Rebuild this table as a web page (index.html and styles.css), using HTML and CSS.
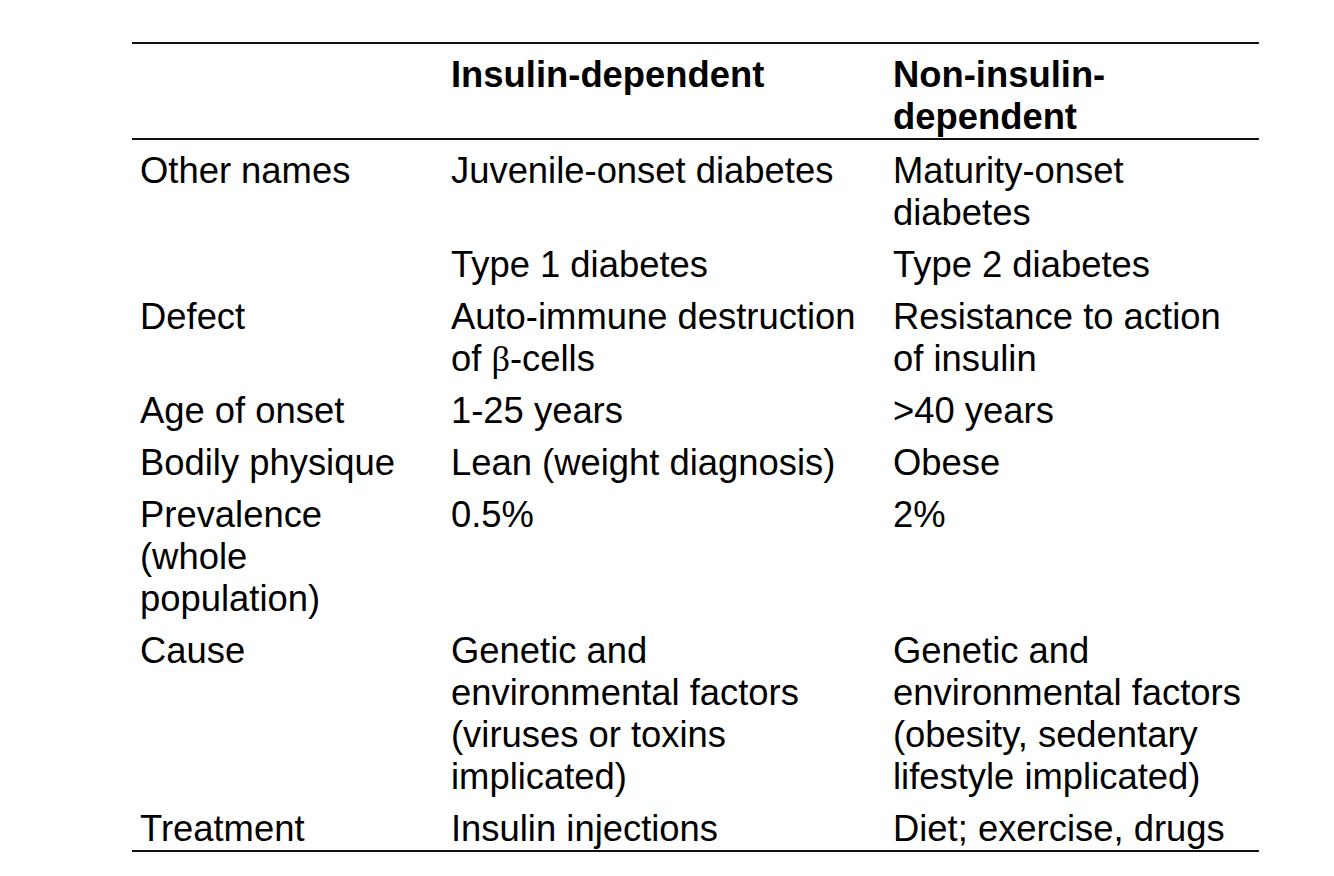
FILE: index.html
```html
<!DOCTYPE html>
<html lang="en">
<head>
<meta charset="utf-8">
<title>Diabetes comparison</title>
<link rel="stylesheet" href="styles.css">
</head>
<body>
<table class="cmp">
  <colgroup>
    <col class="c1">
    <col class="c2">
    <col class="c3">
  </colgroup>
  <thead>
    <tr>
      <th></th>
      <th>Insulin-dependent</th>
      <th>Non-insulin-dependent</th>
    </tr>
  </thead>
  <tbody>
    <tr>
      <td>Other names</td>
      <td>Juvenile-onset diabetes</td>
      <td>Maturity-onset diabetes</td>
    </tr>
    <tr>
      <td></td>
      <td>Type 1 diabetes</td>
      <td>Type 2 diabetes</td>
    </tr>
    <tr>
      <td>Defect</td>
      <td>Auto-immune destruction of <span class="greek">β</span>-cells</td>
      <td>Resistance to action of insulin</td>
    </tr>
    <tr>
      <td>Age of onset</td>
      <td>1-25 years</td>
      <td>&gt;40 years</td>
    </tr>
    <tr>
      <td>Bodily physique</td>
      <td>Lean (weight diagnosis)</td>
      <td>Obese</td>
    </tr>
    <tr>
      <td>Prevalence (whole population)</td>
      <td>0.5%</td>
      <td>2%</td>
    </tr>
    <tr>
      <td>Cause</td>
      <td>Genetic and environmental factors (viruses or toxins implicated)</td>
      <td>Genetic and environmental factors (obesity, sedentary lifestyle implicated)</td>
    </tr>
    <tr>
      <td>Treatment</td>
      <td>Insulin injections</td>
      <td>Diet; exercise, drugs</td>
    </tr>
  </tbody>
</table>
</body>
</html>
```
FILE: styles.css
```css
html, body {
  margin: 0;
  padding: 0;
  background: #ffffff;
}

body {
  padding-top: 42px;
  font-family: "Liberation Sans", Arial, sans-serif;
  color: #000000;
}

.cmp {
  margin-left: 132px;
  width: 1127px;
  table-layout: fixed;
  border-collapse: collapse;
  border-spacing: 0;
  font-size: 36.4px;
  line-height: 42px;
}

.c1 { width: 311px; }
.c2 { width: 442px; }
.c3 { width: 374px; }

.cmp th,
.cmp td {
  text-align: left;
  vertical-align: top;
  padding: 10px 9px 0 8px;
}

.cmp thead tr {
  border-top: 2px solid #111111;
  border-bottom: 2px solid #111111;
}

.cmp th {
  font-weight: bold;
}

.cmp tbody tr:last-child {
  border-bottom: 2px solid #111111;
}

.greek {
  font-family: "Liberation Serif", "Times New Roman", serif;
}
```
